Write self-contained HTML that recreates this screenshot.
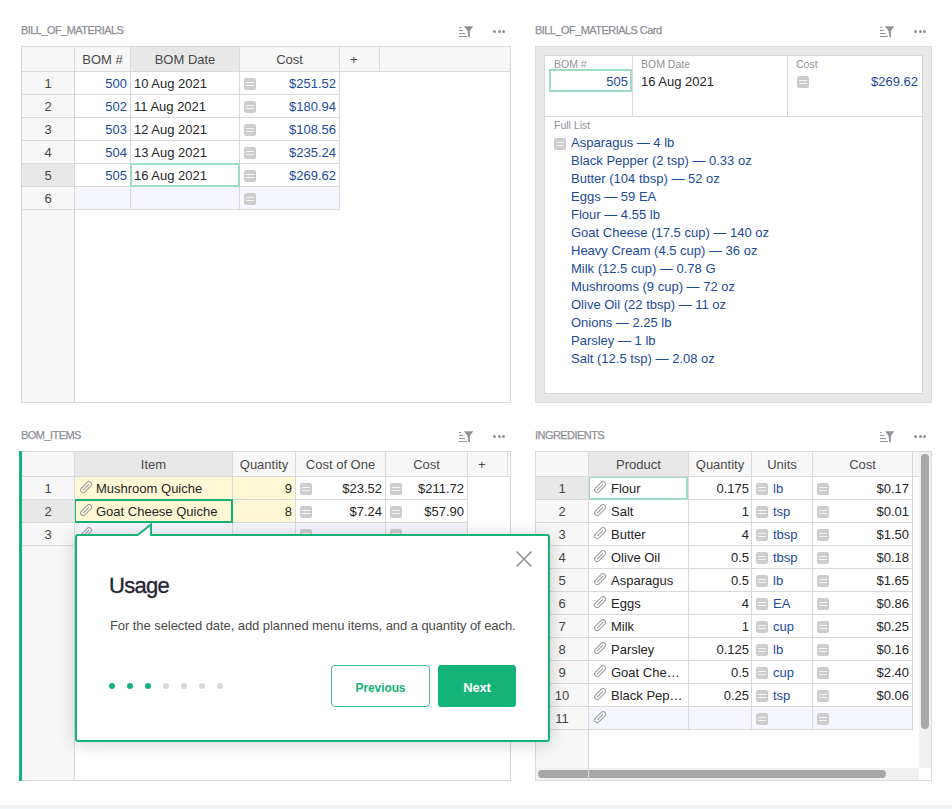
<!DOCTYPE html><html><head><meta charset="utf-8"><style>
html,body{margin:0;padding:0;}
body{width:952px;height:809px;overflow:hidden;position:relative;background:#fff;font-family:"Liberation Sans",sans-serif;}
.a{position:absolute;}
.t{position:absolute;white-space:nowrap;font-size:13px;line-height:16px;color:#262626;}
.st{font-size:11px;color:#8e8e96;letter-spacing:-0.55px;-webkit-text-stroke:0.25px #8e8e96;}
.hd{color:#4a4a4a;}
.bl{color:#1a4b9c;}
.rn{color:#464646;text-align:center;}
.lb{font-size:10.5px;color:#929299;}
.eq{position:absolute;width:12px;height:12px;border-radius:2px;background:#cdcdcd;}
.eq:before,.eq:after{content:"";position:absolute;left:2px;width:8px;height:1.2px;background:#f4f4f4;}
.eq:before{top:3.9px;}
.eq:after{top:6.9px;}
</style></head><body>

<div class="t st" style="left:21px;top:22px;">BILL_OF_MATERIALS</div>
<svg class="a" style="left:459px;top:26px" width="16" height="14" viewBox="0 0 16 14"><rect x="0" y="1" width="2" height="1" fill="#929299"/><rect x="0" y="4" width="4" height="1" fill="#929299"/><rect x="0" y="7" width="6" height="1" fill="#929299"/><rect x="0" y="10" width="8" height="1" fill="#929299"/><path d="M5 0.2 H14.2 L10.9 4.9 V11.7 L9.1 10.4 L8.6 4.9 Z" fill="#929299"/></svg>
<div class="a" style="left:493.0px;top:30.25px;width:3px;height:3px;border-radius:50%;background:#929299"></div>
<div class="a" style="left:497.5px;top:30.25px;width:3px;height:3px;border-radius:50%;background:#929299"></div>
<div class="a" style="left:502.0px;top:30.25px;width:3px;height:3px;border-radius:50%;background:#929299"></div>
<div class="a" style="left:21px;top:46px;width:490px;height:357px;background:#d9d9d9;"></div>
<div class="a" style="left:22px;top:47px;width:488px;height:355px;background:#fff;"></div>
<div class="a" style="left:22px;top:47px;width:52px;height:355px;background:#f7f7f7;"></div>
<div class="a" style="left:74px;top:47px;width:1px;height:355px;background:#d9d9d9;"></div>
<div class="a" style="left:75px;top:47px;width:435px;height:24px;background:#f7f7f7;"></div>
<div class="a" style="left:22px;top:71px;width:488px;height:1px;background:#d9d9d9;"></div>
<div class="a" style="left:130px;top:47px;width:1px;height:24px;background:#d9d9d9;"></div>
<div class="a" style="left:239px;top:47px;width:1px;height:24px;background:#d9d9d9;"></div>
<div class="a" style="left:339px;top:47px;width:1px;height:24px;background:#d9d9d9;"></div>
<div class="a" style="left:379px;top:47px;width:1px;height:24px;background:#d9d9d9;"></div>
<div class="a" style="left:22px;top:94px;width:318px;height:1px;background:#d9d9d9;"></div>
<div class="a" style="left:22px;top:117px;width:318px;height:1px;background:#d9d9d9;"></div>
<div class="a" style="left:22px;top:140px;width:318px;height:1px;background:#d9d9d9;"></div>
<div class="a" style="left:22px;top:163px;width:318px;height:1px;background:#d9d9d9;"></div>
<div class="a" style="left:22px;top:186px;width:318px;height:1px;background:#d9d9d9;"></div>
<div class="a" style="left:22px;top:209px;width:318px;height:1px;background:#d9d9d9;"></div>
<div class="a" style="left:130px;top:72px;width:1px;height:137px;background:#d9d9d9;"></div>
<div class="a" style="left:239px;top:72px;width:1px;height:137px;background:#d9d9d9;"></div>
<div class="a" style="left:339px;top:72px;width:1px;height:137px;background:#d9d9d9;"></div>
<div class="a" style="left:131px;top:47px;width:108px;height:24px;background:#e8e8e8;"></div>
<div class="a" style="left:22px;top:164px;width:52px;height:22px;background:#e8e8e8;"></div>
<div class="a" style="left:75px;top:187px;width:55px;height:22px;background:#f6f6ff;"></div>
<div class="a" style="left:131px;top:187px;width:108px;height:22px;background:#f6f6ff;"></div>
<div class="a" style="left:240px;top:187px;width:99px;height:22px;background:#f6f6ff;"></div>
<div class="t hd" style="left:75px;top:52px;width:55px;text-align:center;">BOM #</div>
<div class="t hd" style="left:131px;top:52px;width:108px;text-align:center;">BOM Date</div>
<div class="t hd" style="left:240px;top:52px;width:99px;text-align:center;">Cost</div>
<div class="t hd" style="left:350px;top:52px;">+</div>
<div class="t rn" style="left:22px;top:76px;width:52px;text-align:center;">1</div>
<div class="t bl" style="left:75px;top:76px;width:52px;text-align:right;">500</div>
<div class="t " style="left:134px;top:76px;">10 Aug 2021</div>
<div class="eq" style="left:244px;top:78px"></div>
<div class="t bl" style="left:240px;top:76px;width:96px;text-align:right;">$251.52</div>
<div class="t rn" style="left:22px;top:99px;width:52px;text-align:center;">2</div>
<div class="t bl" style="left:75px;top:99px;width:52px;text-align:right;">502</div>
<div class="t " style="left:134px;top:99px;">11 Aug 2021</div>
<div class="eq" style="left:244px;top:101px"></div>
<div class="t bl" style="left:240px;top:99px;width:96px;text-align:right;">$180.94</div>
<div class="t rn" style="left:22px;top:122px;width:52px;text-align:center;">3</div>
<div class="t bl" style="left:75px;top:122px;width:52px;text-align:right;">503</div>
<div class="t " style="left:134px;top:122px;">12 Aug 2021</div>
<div class="eq" style="left:244px;top:124px"></div>
<div class="t bl" style="left:240px;top:122px;width:96px;text-align:right;">$108.56</div>
<div class="t rn" style="left:22px;top:145px;width:52px;text-align:center;">4</div>
<div class="t bl" style="left:75px;top:145px;width:52px;text-align:right;">504</div>
<div class="t " style="left:134px;top:145px;">13 Aug 2021</div>
<div class="eq" style="left:244px;top:147px"></div>
<div class="t bl" style="left:240px;top:145px;width:96px;text-align:right;">$235.24</div>
<div class="t rn" style="left:22px;top:168px;width:52px;text-align:center;">5</div>
<div class="t bl" style="left:75px;top:168px;width:52px;text-align:right;">505</div>
<div class="t " style="left:134px;top:168px;">16 Aug 2021</div>
<div class="eq" style="left:244px;top:170px"></div>
<div class="t bl" style="left:240px;top:168px;width:96px;text-align:right;">$269.62</div>
<div class="t rn" style="left:22px;top:191px;width:52px;text-align:center;">6</div>
<div class="eq" style="left:244px;top:193px"></div>
<div class="a" style="left:130px;top:163px;width:106px;height:20px;border:2px solid #9fdcc4;"></div>
<div class="t st" style="left:535px;top:22px;">BILL_OF_MATERIALS Card</div>
<svg class="a" style="left:880px;top:26px" width="16" height="14" viewBox="0 0 16 14"><rect x="0" y="1" width="2" height="1" fill="#929299"/><rect x="0" y="4" width="4" height="1" fill="#929299"/><rect x="0" y="7" width="6" height="1" fill="#929299"/><rect x="0" y="10" width="8" height="1" fill="#929299"/><path d="M5 0.2 H14.2 L10.9 4.9 V11.7 L9.1 10.4 L8.6 4.9 Z" fill="#929299"/></svg>
<div class="a" style="left:914.0px;top:30.25px;width:3px;height:3px;border-radius:50%;background:#929299"></div>
<div class="a" style="left:918.5px;top:30.25px;width:3px;height:3px;border-radius:50%;background:#929299"></div>
<div class="a" style="left:923.0px;top:30.25px;width:3px;height:3px;border-radius:50%;background:#929299"></div>
<div class="a" style="left:535px;top:46px;width:397px;height:357px;background:#dcdcdc;"></div>
<div class="a" style="left:536px;top:47px;width:395px;height:355px;background:#e8e8e8;"></div>
<div class="a" style="left:544px;top:55px;width:379px;height:339px;background:#d9d9d9;"></div>
<div class="a" style="left:545px;top:56px;width:377px;height:337px;background:#fff;"></div>
<div class="a" style="left:632px;top:56px;width:1px;height:60px;background:#d9d9d9;"></div>
<div class="a" style="left:787px;top:56px;width:1px;height:60px;background:#d9d9d9;"></div>
<div class="a" style="left:545px;top:116px;width:377px;height:1px;background:#d9d9d9;"></div>
<div class="t lb" style="left:554px;top:56px;">BOM #</div>
<div class="t lb" style="left:641px;top:56px;">BOM Date</div>
<div class="t lb" style="left:796px;top:56px;">Cost</div>
<div class="a" style="left:549px;top:69px;width:79px;height:19px;border:2px solid #9fdcc4;"></div>
<div class="t bl" style="left:549px;top:74px;width:79px;text-align:right;">505</div>
<div class="t " style="left:641px;top:74px;">16 Aug 2021</div>
<div class="eq" style="left:797px;top:76px"></div>
<div class="t bl" style="left:790px;top:74px;width:128px;text-align:right;">$269.62</div>
<div class="t lb" style="left:554px;top:117px;">Full List</div>
<div class="eq" style="left:554px;top:138px"></div>
<div class="t bl" style="left:571px;top:135px;">Asparagus — 4 lb</div>
<div class="t bl" style="left:571px;top:153px;">Black Pepper (2 tsp) — 0.33 oz</div>
<div class="t bl" style="left:571px;top:171px;">Butter (104 tbsp) — 52 oz</div>
<div class="t bl" style="left:571px;top:189px;">Eggs — 59 EA</div>
<div class="t bl" style="left:571px;top:207px;">Flour — 4.55 lb</div>
<div class="t bl" style="left:571px;top:225px;">Goat Cheese (17.5 cup) — 140 oz</div>
<div class="t bl" style="left:571px;top:243px;">Heavy Cream (4.5 cup) — 36 oz</div>
<div class="t bl" style="left:571px;top:261px;">Milk (12.5 cup) — 0.78 G</div>
<div class="t bl" style="left:571px;top:279px;">Mushrooms (9 cup) — 72 oz</div>
<div class="t bl" style="left:571px;top:297px;">Olive Oil (22 tbsp) — 11 oz</div>
<div class="t bl" style="left:571px;top:315px;">Onions — 2.25 lb</div>
<div class="t bl" style="left:571px;top:333px;">Parsley — 1 lb</div>
<div class="t bl" style="left:571px;top:351px;">Salt (12.5 tsp) — 2.08 oz</div>
<div class="t st" style="left:21px;top:427px;">BOM_ITEMS</div>
<svg class="a" style="left:459px;top:431px" width="16" height="14" viewBox="0 0 16 14"><rect x="0" y="1" width="2" height="1" fill="#929299"/><rect x="0" y="4" width="4" height="1" fill="#929299"/><rect x="0" y="7" width="6" height="1" fill="#929299"/><rect x="0" y="10" width="8" height="1" fill="#929299"/><path d="M5 0.2 H14.2 L10.9 4.9 V11.7 L9.1 10.4 L8.6 4.9 Z" fill="#929299"/></svg>
<div class="a" style="left:493.0px;top:435.25px;width:3px;height:3px;border-radius:50%;background:#929299"></div>
<div class="a" style="left:497.5px;top:435.25px;width:3px;height:3px;border-radius:50%;background:#929299"></div>
<div class="a" style="left:502.0px;top:435.25px;width:3px;height:3px;border-radius:50%;background:#929299"></div>
<div class="a" style="left:21px;top:451px;width:490px;height:330px;background:#d9d9d9;"></div>
<div class="a" style="left:22px;top:452px;width:488px;height:328px;background:#fff;"></div>
<div class="a" style="left:22px;top:452px;width:52px;height:328px;background:#f7f7f7;"></div>
<div class="a" style="left:74px;top:452px;width:1px;height:328px;background:#d9d9d9;"></div>
<div class="a" style="left:75px;top:452px;width:435px;height:24px;background:#f7f7f7;"></div>
<div class="a" style="left:22px;top:476px;width:488px;height:1px;background:#d9d9d9;"></div>
<div class="a" style="left:232px;top:452px;width:1px;height:24px;background:#d9d9d9;"></div>
<div class="a" style="left:295px;top:452px;width:1px;height:24px;background:#d9d9d9;"></div>
<div class="a" style="left:385px;top:452px;width:1px;height:24px;background:#d9d9d9;"></div>
<div class="a" style="left:467px;top:452px;width:1px;height:24px;background:#d9d9d9;"></div>
<div class="a" style="left:507px;top:452px;width:1px;height:24px;background:#d9d9d9;"></div>
<div class="a" style="left:22px;top:499px;width:446px;height:1px;background:#d9d9d9;"></div>
<div class="a" style="left:22px;top:522px;width:446px;height:1px;background:#d9d9d9;"></div>
<div class="a" style="left:22px;top:545px;width:446px;height:1px;background:#d9d9d9;"></div>
<div class="a" style="left:232px;top:477px;width:1px;height:68px;background:#d9d9d9;"></div>
<div class="a" style="left:295px;top:477px;width:1px;height:68px;background:#d9d9d9;"></div>
<div class="a" style="left:385px;top:477px;width:1px;height:68px;background:#d9d9d9;"></div>
<div class="a" style="left:467px;top:477px;width:1px;height:68px;background:#d9d9d9;"></div>
<div class="a" style="left:75px;top:452px;width:157px;height:24px;background:#e8e8e8;"></div>
<div class="a" style="left:508px;top:452px;width:2px;height:24px;background:#fff;"></div>
<div class="a" style="left:75px;top:477px;width:157px;height:22px;background:#fff8d4;"></div>
<div class="a" style="left:233px;top:477px;width:62px;height:22px;background:#fff8d4;"></div>
<div class="a" style="left:75px;top:500px;width:157px;height:22px;background:#fff8d4;"></div>
<div class="a" style="left:233px;top:500px;width:62px;height:22px;background:#fff8d4;"></div>
<div class="a" style="left:22px;top:500px;width:52px;height:22px;background:#e8e8e8;"></div>
<div class="a" style="left:75px;top:523px;width:157px;height:22px;background:#f6f6ff;"></div>
<div class="a" style="left:233px;top:523px;width:62px;height:22px;background:#f6f6ff;"></div>
<div class="a" style="left:296px;top:523px;width:89px;height:22px;background:#f6f6ff;"></div>
<div class="a" style="left:386px;top:523px;width:81px;height:22px;background:#f6f6ff;"></div>
<div class="t hd" style="left:75px;top:457px;width:157px;text-align:center;">Item</div>
<div class="t hd" style="left:233px;top:457px;width:62px;text-align:center;">Quantity</div>
<div class="t hd" style="left:296px;top:457px;width:89px;text-align:center;">Cost of One</div>
<div class="t hd" style="left:386px;top:457px;width:81px;text-align:center;">Cost</div>
<div class="t hd" style="left:478px;top:457px;">+</div>
<div class="t rn" style="left:22px;top:481px;width:52px;text-align:center;">1</div>
<svg class="a" style="left:80px;top:481px" width="13" height="13" viewBox="0 0 13 13"><path d="M4.9 10.9 L10.9 4.9 A2.55 2.55 0 0 0 7.3 1.3 L1.3 7.3 A2.55 2.55 0 0 0 4.9 10.9 Z M3.6 8.6 L8.6 3.6" fill="none" stroke="#9c9ca4" stroke-width="1.05" stroke-linecap="round"/></svg>
<div class="t " style="left:96px;top:481px;">Mushroom Quiche</div>
<div class="t " style="left:233px;top:481px;width:59px;text-align:right;">9</div>
<div class="eq" style="left:300px;top:483px"></div>
<div class="t " style="left:296px;top:481px;width:86px;text-align:right;">$23.52</div>
<div class="eq" style="left:390px;top:483px"></div>
<div class="t " style="left:386px;top:481px;width:78px;text-align:right;">$211.72</div>
<div class="t rn" style="left:22px;top:504px;width:52px;text-align:center;">2</div>
<svg class="a" style="left:80px;top:504px" width="13" height="13" viewBox="0 0 13 13"><path d="M4.9 10.9 L10.9 4.9 A2.55 2.55 0 0 0 7.3 1.3 L1.3 7.3 A2.55 2.55 0 0 0 4.9 10.9 Z M3.6 8.6 L8.6 3.6" fill="none" stroke="#9c9ca4" stroke-width="1.05" stroke-linecap="round"/></svg>
<div class="t " style="left:96px;top:504px;">Goat Cheese Quiche</div>
<div class="t " style="left:233px;top:504px;width:59px;text-align:right;">8</div>
<div class="eq" style="left:300px;top:506px"></div>
<div class="t " style="left:296px;top:504px;width:86px;text-align:right;">$7.24</div>
<div class="eq" style="left:390px;top:506px"></div>
<div class="t " style="left:386px;top:504px;width:78px;text-align:right;">$57.90</div>
<div class="t rn" style="left:22px;top:527px;width:52px;text-align:center;">3</div>
<svg class="a" style="left:80px;top:527px" width="13" height="13" viewBox="0 0 13 13"><path d="M4.9 10.9 L10.9 4.9 A2.55 2.55 0 0 0 7.3 1.3 L1.3 7.3 A2.55 2.55 0 0 0 4.9 10.9 Z M3.6 8.6 L8.6 3.6" fill="none" stroke="#9c9ca4" stroke-width="1.05" stroke-linecap="round"/></svg>
<div class="eq" style="left:300px;top:529px"></div>
<div class="eq" style="left:390px;top:529px"></div>
<div class="a" style="left:75px;top:499px;width:158px;height:24px;overflow:hidden;"><div class="a" style="left:-1px;top:0;width:155px;height:20px;border:2px solid #16b378;"></div></div>
<div class="a" style="left:19px;top:451px;width:3px;height:330px;background:#16b378;"></div>
<div class="t st" style="left:535px;top:427px;">INGREDIENTS</div>
<svg class="a" style="left:880px;top:431px" width="16" height="14" viewBox="0 0 16 14"><rect x="0" y="1" width="2" height="1" fill="#929299"/><rect x="0" y="4" width="4" height="1" fill="#929299"/><rect x="0" y="7" width="6" height="1" fill="#929299"/><rect x="0" y="10" width="8" height="1" fill="#929299"/><path d="M5 0.2 H14.2 L10.9 4.9 V11.7 L9.1 10.4 L8.6 4.9 Z" fill="#929299"/></svg>
<div class="a" style="left:914.0px;top:435.25px;width:3px;height:3px;border-radius:50%;background:#929299"></div>
<div class="a" style="left:918.5px;top:435.25px;width:3px;height:3px;border-radius:50%;background:#929299"></div>
<div class="a" style="left:923.0px;top:435.25px;width:3px;height:3px;border-radius:50%;background:#929299"></div>
<div class="a" style="left:535px;top:451px;width:397px;height:330px;background:#d9d9d9;"></div>
<div class="a" style="left:536px;top:452px;width:395px;height:328px;background:#fff;"></div>
<div class="a" style="left:536px;top:452px;width:52px;height:328px;background:#f7f7f7;"></div>
<div class="a" style="left:588px;top:452px;width:1px;height:328px;background:#d9d9d9;"></div>
<div class="a" style="left:589px;top:452px;width:330px;height:24px;background:#f7f7f7;"></div>
<div class="a" style="left:536px;top:476px;width:383px;height:1px;background:#d9d9d9;"></div>
<div class="a" style="left:688px;top:452px;width:1px;height:24px;background:#d9d9d9;"></div>
<div class="a" style="left:751px;top:452px;width:1px;height:24px;background:#d9d9d9;"></div>
<div class="a" style="left:812px;top:452px;width:1px;height:24px;background:#d9d9d9;"></div>
<div class="a" style="left:912px;top:452px;width:1px;height:24px;background:#d9d9d9;"></div>
<div class="a" style="left:536px;top:499px;width:377px;height:1px;background:#d9d9d9;"></div>
<div class="a" style="left:536px;top:522px;width:377px;height:1px;background:#d9d9d9;"></div>
<div class="a" style="left:536px;top:545px;width:377px;height:1px;background:#d9d9d9;"></div>
<div class="a" style="left:536px;top:568px;width:377px;height:1px;background:#d9d9d9;"></div>
<div class="a" style="left:536px;top:591px;width:377px;height:1px;background:#d9d9d9;"></div>
<div class="a" style="left:536px;top:614px;width:377px;height:1px;background:#d9d9d9;"></div>
<div class="a" style="left:536px;top:637px;width:377px;height:1px;background:#d9d9d9;"></div>
<div class="a" style="left:536px;top:660px;width:377px;height:1px;background:#d9d9d9;"></div>
<div class="a" style="left:536px;top:683px;width:377px;height:1px;background:#d9d9d9;"></div>
<div class="a" style="left:536px;top:706px;width:377px;height:1px;background:#d9d9d9;"></div>
<div class="a" style="left:536px;top:729px;width:377px;height:1px;background:#d9d9d9;"></div>
<div class="a" style="left:688px;top:477px;width:1px;height:252px;background:#d9d9d9;"></div>
<div class="a" style="left:751px;top:477px;width:1px;height:252px;background:#d9d9d9;"></div>
<div class="a" style="left:812px;top:477px;width:1px;height:252px;background:#d9d9d9;"></div>
<div class="a" style="left:912px;top:477px;width:1px;height:252px;background:#d9d9d9;"></div>
<div class="a" style="left:589px;top:452px;width:99px;height:24px;background:#e8e8e8;"></div>
<div class="a" style="left:536px;top:477px;width:52px;height:22px;background:#e8e8e8;"></div>
<div class="a" style="left:589px;top:707px;width:99px;height:22px;background:#f6f6ff;"></div>
<div class="a" style="left:689px;top:707px;width:62px;height:22px;background:#f6f6ff;"></div>
<div class="a" style="left:752px;top:707px;width:60px;height:22px;background:#f6f6ff;"></div>
<div class="a" style="left:813px;top:707px;width:99px;height:22px;background:#f6f6ff;"></div>
<div class="t hd" style="left:589px;top:457px;width:99px;text-align:center;">Product</div>
<div class="t hd" style="left:689px;top:457px;width:62px;text-align:center;">Quantity</div>
<div class="t hd" style="left:752px;top:457px;width:60px;text-align:center;">Units</div>
<div class="t hd" style="left:813px;top:457px;width:99px;text-align:center;">Cost</div>
<div class="t rn" style="left:536px;top:481px;width:52px;text-align:center;">1</div>
<svg class="a" style="left:594px;top:481px" width="13" height="13" viewBox="0 0 13 13"><path d="M4.9 10.9 L10.9 4.9 A2.55 2.55 0 0 0 7.3 1.3 L1.3 7.3 A2.55 2.55 0 0 0 4.9 10.9 Z M3.6 8.6 L8.6 3.6" fill="none" stroke="#9c9ca4" stroke-width="1.05" stroke-linecap="round"/></svg>
<div class="t " style="left:611px;top:481px;">Flour</div>
<div class="t " style="left:689px;top:481px;width:60px;text-align:right;">0.175</div>
<div class="eq" style="left:756px;top:483px"></div>
<div class="t bl" style="left:773px;top:481px;">lb</div>
<div class="eq" style="left:817px;top:483px"></div>
<div class="t " style="left:813px;top:481px;width:96px;text-align:right;">$0.17</div>
<div class="t rn" style="left:536px;top:504px;width:52px;text-align:center;">2</div>
<svg class="a" style="left:594px;top:504px" width="13" height="13" viewBox="0 0 13 13"><path d="M4.9 10.9 L10.9 4.9 A2.55 2.55 0 0 0 7.3 1.3 L1.3 7.3 A2.55 2.55 0 0 0 4.9 10.9 Z M3.6 8.6 L8.6 3.6" fill="none" stroke="#9c9ca4" stroke-width="1.05" stroke-linecap="round"/></svg>
<div class="t " style="left:611px;top:504px;">Salt</div>
<div class="t " style="left:689px;top:504px;width:60px;text-align:right;">1</div>
<div class="eq" style="left:756px;top:506px"></div>
<div class="t bl" style="left:773px;top:504px;">tsp</div>
<div class="eq" style="left:817px;top:506px"></div>
<div class="t " style="left:813px;top:504px;width:96px;text-align:right;">$0.01</div>
<div class="t rn" style="left:536px;top:527px;width:52px;text-align:center;">3</div>
<svg class="a" style="left:594px;top:527px" width="13" height="13" viewBox="0 0 13 13"><path d="M4.9 10.9 L10.9 4.9 A2.55 2.55 0 0 0 7.3 1.3 L1.3 7.3 A2.55 2.55 0 0 0 4.9 10.9 Z M3.6 8.6 L8.6 3.6" fill="none" stroke="#9c9ca4" stroke-width="1.05" stroke-linecap="round"/></svg>
<div class="t " style="left:611px;top:527px;">Butter</div>
<div class="t " style="left:689px;top:527px;width:60px;text-align:right;">4</div>
<div class="eq" style="left:756px;top:529px"></div>
<div class="t bl" style="left:773px;top:527px;">tbsp</div>
<div class="eq" style="left:817px;top:529px"></div>
<div class="t " style="left:813px;top:527px;width:96px;text-align:right;">$1.50</div>
<div class="t rn" style="left:536px;top:550px;width:52px;text-align:center;">4</div>
<svg class="a" style="left:594px;top:550px" width="13" height="13" viewBox="0 0 13 13"><path d="M4.9 10.9 L10.9 4.9 A2.55 2.55 0 0 0 7.3 1.3 L1.3 7.3 A2.55 2.55 0 0 0 4.9 10.9 Z M3.6 8.6 L8.6 3.6" fill="none" stroke="#9c9ca4" stroke-width="1.05" stroke-linecap="round"/></svg>
<div class="t " style="left:611px;top:550px;">Olive Oil</div>
<div class="t " style="left:689px;top:550px;width:60px;text-align:right;">0.5</div>
<div class="eq" style="left:756px;top:552px"></div>
<div class="t bl" style="left:773px;top:550px;">tbsp</div>
<div class="eq" style="left:817px;top:552px"></div>
<div class="t " style="left:813px;top:550px;width:96px;text-align:right;">$0.18</div>
<div class="t rn" style="left:536px;top:573px;width:52px;text-align:center;">5</div>
<svg class="a" style="left:594px;top:573px" width="13" height="13" viewBox="0 0 13 13"><path d="M4.9 10.9 L10.9 4.9 A2.55 2.55 0 0 0 7.3 1.3 L1.3 7.3 A2.55 2.55 0 0 0 4.9 10.9 Z M3.6 8.6 L8.6 3.6" fill="none" stroke="#9c9ca4" stroke-width="1.05" stroke-linecap="round"/></svg>
<div class="t " style="left:611px;top:573px;">Asparagus</div>
<div class="t " style="left:689px;top:573px;width:60px;text-align:right;">0.5</div>
<div class="eq" style="left:756px;top:575px"></div>
<div class="t bl" style="left:773px;top:573px;">lb</div>
<div class="eq" style="left:817px;top:575px"></div>
<div class="t " style="left:813px;top:573px;width:96px;text-align:right;">$1.65</div>
<div class="t rn" style="left:536px;top:596px;width:52px;text-align:center;">6</div>
<svg class="a" style="left:594px;top:596px" width="13" height="13" viewBox="0 0 13 13"><path d="M4.9 10.9 L10.9 4.9 A2.55 2.55 0 0 0 7.3 1.3 L1.3 7.3 A2.55 2.55 0 0 0 4.9 10.9 Z M3.6 8.6 L8.6 3.6" fill="none" stroke="#9c9ca4" stroke-width="1.05" stroke-linecap="round"/></svg>
<div class="t " style="left:611px;top:596px;">Eggs</div>
<div class="t " style="left:689px;top:596px;width:60px;text-align:right;">4</div>
<div class="eq" style="left:756px;top:598px"></div>
<div class="t bl" style="left:773px;top:596px;">EA</div>
<div class="eq" style="left:817px;top:598px"></div>
<div class="t " style="left:813px;top:596px;width:96px;text-align:right;">$0.86</div>
<div class="t rn" style="left:536px;top:619px;width:52px;text-align:center;">7</div>
<svg class="a" style="left:594px;top:619px" width="13" height="13" viewBox="0 0 13 13"><path d="M4.9 10.9 L10.9 4.9 A2.55 2.55 0 0 0 7.3 1.3 L1.3 7.3 A2.55 2.55 0 0 0 4.9 10.9 Z M3.6 8.6 L8.6 3.6" fill="none" stroke="#9c9ca4" stroke-width="1.05" stroke-linecap="round"/></svg>
<div class="t " style="left:611px;top:619px;">Milk</div>
<div class="t " style="left:689px;top:619px;width:60px;text-align:right;">1</div>
<div class="eq" style="left:756px;top:621px"></div>
<div class="t bl" style="left:773px;top:619px;">cup</div>
<div class="eq" style="left:817px;top:621px"></div>
<div class="t " style="left:813px;top:619px;width:96px;text-align:right;">$0.25</div>
<div class="t rn" style="left:536px;top:642px;width:52px;text-align:center;">8</div>
<svg class="a" style="left:594px;top:642px" width="13" height="13" viewBox="0 0 13 13"><path d="M4.9 10.9 L10.9 4.9 A2.55 2.55 0 0 0 7.3 1.3 L1.3 7.3 A2.55 2.55 0 0 0 4.9 10.9 Z M3.6 8.6 L8.6 3.6" fill="none" stroke="#9c9ca4" stroke-width="1.05" stroke-linecap="round"/></svg>
<div class="t " style="left:611px;top:642px;">Parsley</div>
<div class="t " style="left:689px;top:642px;width:60px;text-align:right;">0.125</div>
<div class="eq" style="left:756px;top:644px"></div>
<div class="t bl" style="left:773px;top:642px;">lb</div>
<div class="eq" style="left:817px;top:644px"></div>
<div class="t " style="left:813px;top:642px;width:96px;text-align:right;">$0.16</div>
<div class="t rn" style="left:536px;top:665px;width:52px;text-align:center;">9</div>
<svg class="a" style="left:594px;top:665px" width="13" height="13" viewBox="0 0 13 13"><path d="M4.9 10.9 L10.9 4.9 A2.55 2.55 0 0 0 7.3 1.3 L1.3 7.3 A2.55 2.55 0 0 0 4.9 10.9 Z M3.6 8.6 L8.6 3.6" fill="none" stroke="#9c9ca4" stroke-width="1.05" stroke-linecap="round"/></svg>
<div class="t " style="left:611px;top:665px;">Goat Che…</div>
<div class="t " style="left:689px;top:665px;width:60px;text-align:right;">0.5</div>
<div class="eq" style="left:756px;top:667px"></div>
<div class="t bl" style="left:773px;top:665px;">cup</div>
<div class="eq" style="left:817px;top:667px"></div>
<div class="t " style="left:813px;top:665px;width:96px;text-align:right;">$2.40</div>
<div class="t rn" style="left:536px;top:688px;width:52px;text-align:center;">10</div>
<svg class="a" style="left:594px;top:688px" width="13" height="13" viewBox="0 0 13 13"><path d="M4.9 10.9 L10.9 4.9 A2.55 2.55 0 0 0 7.3 1.3 L1.3 7.3 A2.55 2.55 0 0 0 4.9 10.9 Z M3.6 8.6 L8.6 3.6" fill="none" stroke="#9c9ca4" stroke-width="1.05" stroke-linecap="round"/></svg>
<div class="t " style="left:611px;top:688px;">Black Pep…</div>
<div class="t " style="left:689px;top:688px;width:60px;text-align:right;">0.25</div>
<div class="eq" style="left:756px;top:690px"></div>
<div class="t bl" style="left:773px;top:688px;">tsp</div>
<div class="eq" style="left:817px;top:690px"></div>
<div class="t " style="left:813px;top:688px;width:96px;text-align:right;">$0.06</div>
<div class="t rn" style="left:536px;top:711px;width:52px;text-align:center;">11</div>
<svg class="a" style="left:594px;top:711px" width="13" height="13" viewBox="0 0 13 13"><path d="M4.9 10.9 L10.9 4.9 A2.55 2.55 0 0 0 7.3 1.3 L1.3 7.3 A2.55 2.55 0 0 0 4.9 10.9 Z M3.6 8.6 L8.6 3.6" fill="none" stroke="#9c9ca4" stroke-width="1.05" stroke-linecap="round"/></svg>
<div class="eq" style="left:756px;top:713px"></div>
<div class="eq" style="left:817px;top:713px"></div>
<div class="a" style="left:589px;top:477px;width:100px;height:23px;overflow:hidden;"><div class="a" style="left:-1px;top:-1px;width:96px;height:20px;border:2px solid #9fdcc4;"></div></div>
<div class="a" style="left:919px;top:452px;width:12px;height:316px;background:#f0f0f0;"></div>
<div class="a" style="left:921px;top:454px;width:8px;height:275px;border-radius:4px;background:#a8a8a8;"></div>
<div class="a" style="left:536px;top:768px;width:383px;height:12px;background:#f0f0f0;"></div>
<div class="a" style="left:538px;top:770px;width:348px;height:8px;border-radius:4px;background:#a8a8a8;"></div>
<div class="a" style="left:919px;top:768px;width:12px;height:12px;background:#fff;"></div>
<div class="a" style="left:588px;top:768px;width:1px;height:12px;background:#d9d9d9;"></div>
<div class="a" style="left:75px;top:534px;width:471px;height:204px;border:2px solid #16b378;border-radius:3px;background:#fff;box-shadow:0 2px 18px rgba(0,0,0,0.18);"></div>
<svg class="a" style="left:136px;top:523px" width="17" height="14" viewBox="0 0 17 14"><path d="M1 12.5 L15 1.5 V12.5" fill="#fff" stroke="#16b378" stroke-width="2"/><rect x="2.5" y="12" width="11.5" height="3" fill="#fff"/></svg>
<svg class="a" style="left:515px;top:550px" width="18" height="18" viewBox="0 0 18 18"><path d="M1.5 1.5 L16.5 16.5 M16.5 1.5 L1.5 16.5" stroke="#929299" stroke-width="1.6"/></svg>
<div class="t " style="left:109px;top:573px;font-size:22px;line-height:26px;color:#262633;letter-spacing:-0.7px;-webkit-text-stroke:0.35px #262633;">Usage</div>
<div class="t " style="left:110px;top:618px;font-size:13px;color:#4a4a4a;letter-spacing:-0.07px;">For the selected date, add planned menu items, and a quantity of each.</div>
<div class="a" style="left:109px;top:683px;width:6px;height:6px;border-radius:50%;background:#16b378"></div>
<div class="a" style="left:127px;top:683px;width:6px;height:6px;border-radius:50%;background:#16b378"></div>
<div class="a" style="left:145px;top:683px;width:6px;height:6px;border-radius:50%;background:#16b378"></div>
<div class="a" style="left:163px;top:683px;width:6px;height:6px;border-radius:50%;background:#d9d9d9"></div>
<div class="a" style="left:181px;top:683px;width:6px;height:6px;border-radius:50%;background:#d9d9d9"></div>
<div class="a" style="left:199px;top:683px;width:6px;height:6px;border-radius:50%;background:#d9d9d9"></div>
<div class="a" style="left:217px;top:683px;width:6px;height:6px;border-radius:50%;background:#d9d9d9"></div>
<div class="a" style="left:331px;top:665px;width:97px;height:40px;border:1px solid #3dbd8a;border-radius:4px;"></div>
<div class="t " style="left:331px;top:680px;width:99px;text-align:center;font-weight:bold;font-size:12px;color:#16b378;letter-spacing:-0.1px;">Previous</div>
<div class="a" style="left:438px;top:665px;width:78px;height:42px;border-radius:3px;background:#16b378;"></div>
<div class="t " style="left:438px;top:680px;width:78px;text-align:center;font-weight:bold;font-size:13px;color:#fff;letter-spacing:-0.2px;">Next</div>
<div class="a" style="left:0px;top:805px;width:952px;height:4px;background:#f2f3f5;"></div>
</body></html>
